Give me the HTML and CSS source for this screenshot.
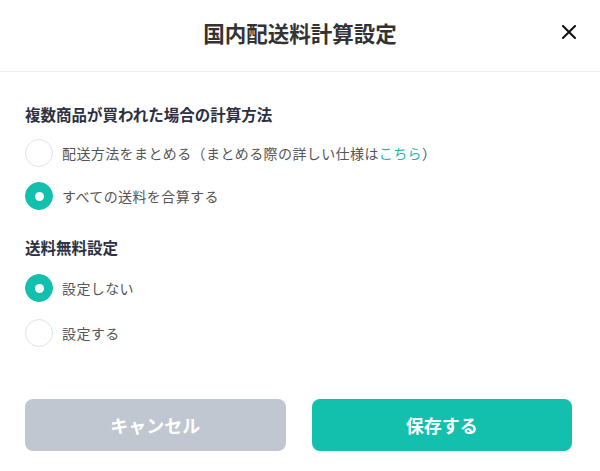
FILE: index.html
```html
<!DOCTYPE html>
<html lang="ja">
<head>
<meta charset="utf-8">
<title>国内配送料計算設定</title>
<link rel="stylesheet" href="styles.css">
</head>
<body>
<div class="modal">
  <header class="modal-header">
    <h1 class="modal-title">国内配送料計算設定</h1>
    <button class="close-btn" aria-label="閉じる">
      <svg width="14" height="14" viewBox="0 0 14 14"><path d="M1 1 L13 13 M13 1 L1 13" stroke="#111" stroke-width="2" stroke-linecap="square" fill="none"/></svg>
    </button>
  </header>
  <div class="modal-body">
    <section class="group">
      <h2 class="group-title">複数商品が買われた場合の計算方法</h2>
      <div class="options">
        <label class="option"><span class="radio"></span><span class="option-text">配送方法をまとめる（まとめる際の詳しい仕様は<a class="link" href="#">こちら</a>）</span></label>
        <label class="option"><span class="radio checked"></span><span class="option-text">すべての送料を合算する</span></label>
      </div>
    </section>
    <section class="group group-second">
      <h2 class="group-title">送料無料設定</h2>
      <div class="options options-loose">
        <label class="option"><span class="radio checked"></span><span class="option-text">設定しない</span></label>
        <label class="option"><span class="radio"></span><span class="option-text">設定する</span></label>
      </div>
    </section>
    <div class="actions">
      <button class="btn btn-cancel">キャンセル</button>
      <button class="btn btn-save">保存する</button>
    </div>
  </div>
</div>
</body>
</html>
```

FILE: styles.css
```css
* { box-sizing: border-box; }
html, body { margin: 0; padding: 0; background: #fff; }
body {
  font-family: "Noto Sans CJK JP", "Noto Sans", sans-serif;
  color: #333;
  width: 600px;
  height: 471px;
  overflow: hidden;
}
.modal { width: 600px; }
.modal-header {
  height: 72px;
  border-bottom: 1px solid #eeeeee;
  display: flex;
  align-items: center;
  justify-content: center;
  position: relative;
}
.modal-title {
  margin: 0 0 5px 0;
  font-size: 21.5px;
  font-weight: 700;
  color: #333;
  line-height: 30px;
}
.close-btn {
  position: absolute;
  right: 23px;
  top: 24px;
  width: 16px;
  height: 16px;
  padding: 1px;
  border: none;
  background: none;
  display: flex;
  align-items: center;
  justify-content: center;
}
.modal-body { padding: 31px 25px 0 25px; }
.group-title {
  margin: 0;
  font-size: 15.5px;
  line-height: 22px;
  font-weight: 700;
  color: #2b3042;
}
.group-second { margin-top: 26px; }
.options {
  display: flex;
  flex-direction: column;
  gap: 15px;
  margin-top: 14px;
}
.options-loose { gap: 17px; margin-top: 16px; }
.option {
  display: flex;
  align-items: center;
  gap: 9px;
  height: 28px;
}
.radio {
  width: 28px;
  height: 28px;
  border-radius: 50%;
  border: 1px solid #e2e2e2;
  background: #fff;
  flex: none;
  display: flex;
  align-items: center;
  justify-content: center;
}
.radio.checked {
  background: #13bfad;
  border-color: #13bfad;
}
.radio.checked::after {
  content: "";
  width: 9px;
  height: 9px;
  border-radius: 50%;
  background: #fff;
}
.option-text {
  font-size: 14px;
  letter-spacing: 0.4px;
  color: #555;
  line-height: 20px;
}
.link { color: #1ab9b0; text-decoration: none; }
.actions {
  display: flex;
  gap: 26px;
  margin-top: 52px;
  padding-right: 3px;
}
.btn {
  flex: 1;
  height: 52px;
  border: none;
  border-radius: 8px;
  font-family: "Noto Sans CJK JP", "Noto Sans", sans-serif;
  font-size: 18px;
  font-weight: 700;
  color: #fff;
}
.btn-cancel { background: #c1c7d1; }
.btn-save { background: #13bfad; }
```
